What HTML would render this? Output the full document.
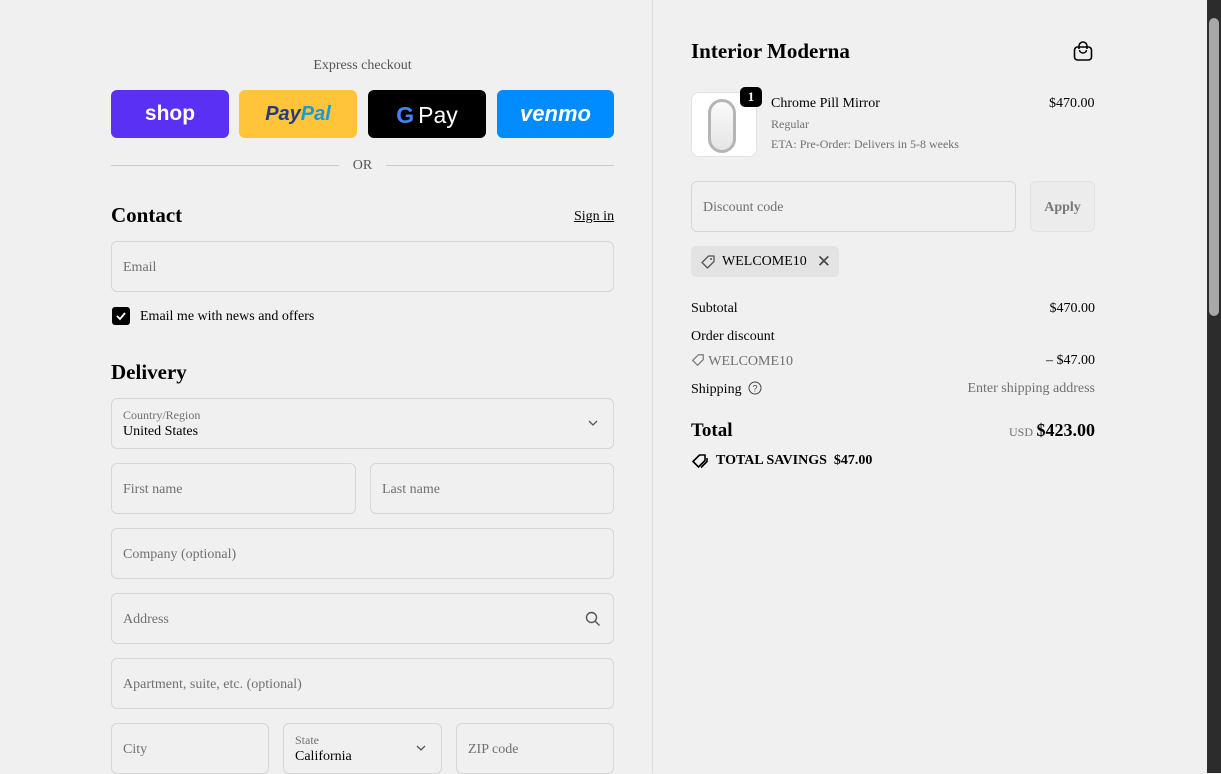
<!DOCTYPE html>
<html><head><meta charset="utf-8"><style>
*{box-sizing:border-box;margin:0;padding:0}
body{width:1221px;height:773px;overflow:hidden;background:#f0f0f0;font-family:"Liberation Serif",serif;color:#000;position:relative}
.abs{position:absolute}
.inp{position:absolute;border:1px solid #d6d6d6;border-radius:6px;background:#f0f0f0;font-size:14px;color:#707070;padding-left:11px;padding-top:2px;display:flex;align-items:center}
.btn{position:absolute;top:90px;height:48px;width:118px;border-radius:6px;display:flex;align-items:center;justify-content:center;font-family:"Liberation Sans",sans-serif;font-weight:bold}
.row{position:absolute;left:691px;width:404px;display:flex;justify-content:space-between;font-size:14px}
</style></head><body>
<div class="abs" style="left:652px;top:0;width:1px;height:773px;background:#dcdcdc"></div>
<div class="abs" style="left:1207px;top:0;width:14px;height:773px;background:#2c2c2c"></div>
<div class="abs" style="left:1209px;top:18px;width:10px;height:298px;background:#a8a8a8;border-radius:5px"></div>

<div class="abs" style="left:111px;width:503px;top:58px;text-align:center;font-size:14px;color:#555">Express checkout</div>
<div class="btn" style="left:111px;background:#5a31f4;color:#fff;font-size:21px">shop</div>
<div class="btn" style="left:239px;background:#ffc439;font-size:20px;font-style:italic"><span style="color:#253b80">Pay</span><span style="color:#179bd7">Pal</span></div>
<div class="btn" style="left:368px;background:#000;color:#fff;font-size:23px;font-weight:normal;padding-top:2px"><span style="font-weight:bold;color:#4285f4;margin-right:4px">G</span>Pay</div>
<div class="btn" style="left:497px;width:117px;background:#008cff;color:#fff;font-size:22px;font-style:italic">venmo</div>
<div class="abs" style="left:111px;top:165px;width:228px;height:1px;background:#ccc"></div>
<div class="abs" style="left:386px;top:165px;width:228px;height:1px;background:#ccc"></div>
<div class="abs" style="left:339px;width:47px;top:158px;text-align:center;font-size:14px;color:#555">OR</div>

<div class="abs" style="left:111px;top:203px;font-size:21px;font-weight:bold">Contact</div>
<div class="abs" style="left:574px;top:209px;font-size:14px;text-decoration:underline">Sign in</div>
<div class="inp" style="left:111px;top:241px;width:503px;height:51px">Email</div>
<div class="abs" style="left:112px;top:307px;width:18px;height:18px;background:#000;border-radius:3px"><svg width="18" height="18" viewBox="0 0 18 18"><path d="M5 9l3 3 5-6" stroke="#fff" stroke-width="1.8" fill="none"/></svg></div>
<div class="abs" style="left:140px;top:309px;font-size:14px">Email me with news and offers</div>

<div class="abs" style="left:111px;top:360px;font-size:21px;font-weight:bold">Delivery</div>
<div class="inp" style="left:111px;top:398px;width:503px;height:51px;display:block;padding-top:9px"><div style="font-size:12px;color:#707070">Country/Region</div><div style="color:#000;font-size:14px;margin-top:1px">United States</div></div>
<svg class="abs" style="left:587px;top:418px" width="12" height="10"><path d="M2 3l4 4 4-4" stroke="#555" stroke-width="1.3" fill="none"/></svg>
<div class="inp" style="left:111px;top:463px;width:245px;height:51px">First name</div>
<div class="inp" style="left:370px;top:463px;width:244px;height:51px">Last name</div>
<div class="inp" style="left:111px;top:528px;width:503px;height:51px">Company (optional)</div>
<div class="inp" style="left:111px;top:593px;width:503px;height:51px">Address</div>
<svg class="abs" style="left:585px;top:611px" width="16" height="16"><circle cx="6.5" cy="6.5" r="5" stroke="#555" stroke-width="1.4" fill="none"/><path d="M10 10l4.5 4.5" stroke="#555" stroke-width="1.4"/></svg>
<div class="inp" style="left:111px;top:658px;width:503px;height:51px">Apartment, suite, etc. (optional)</div>
<div class="inp" style="left:111px;top:723px;width:158px;height:51px">City</div>
<div class="inp" style="left:283px;top:723px;width:159px;height:51px;display:block;padding-top:9px"><div style="font-size:12px">State</div><div style="color:#000;font-size:14px;margin-top:1px">California</div></div>
<svg class="abs" style="left:415px;top:743px" width="12" height="10"><path d="M2 3l4 4 4-4" stroke="#555" stroke-width="1.3" fill="none"/></svg>
<div class="inp" style="left:456px;top:723px;width:158px;height:51px">ZIP code</div>

<div class="abs" style="left:691px;top:39px;font-size:21px;font-weight:bold">Interior Moderna</div>
<svg class="abs" style="left:1072px;top:40px" width="22" height="22" viewBox="0 0 22 22"><rect x="2.5" y="7" width="17" height="13" rx="3" stroke="#000" stroke-width="1.6" fill="none"/><path d="M7 9V6a4 4 0 0 1 8 0v3" stroke="#000" stroke-width="1.6" fill="none"/><path d="M7.5 10a3.5 3 0 0 0 7 0" stroke="#000" stroke-width="1.4" fill="none"/></svg>
<div class="abs" style="left:691px;top:92px;width:66px;height:65px;background:#fff;border-radius:8px;border:1px solid #e2e2e2"></div>
<div class="abs" style="left:708px;top:99px;width:28px;height:54px;border-radius:14px;border:3px solid #b5b5b5;background:linear-gradient(#fafafa,#e5e5e5)"></div>
<div class="abs" style="left:740px;top:87px;width:22px;height:20px;background:#000;border-radius:5px;color:#fff;font-size:13px;font-weight:bold;text-align:center;line-height:20px">1</div>
<div class="abs" style="left:771px;top:96px;font-size:14px">Chrome Pill Mirror</div>
<div class="abs" style="left:771px;top:117px;font-size:12px;color:#707070">Regular</div>
<div class="abs" style="left:771px;top:137px;font-size:12px;color:#707070">ETA: Pre-Order: Delivers in 5-8 weeks</div>
<div class="abs" style="left:1049px;top:96px;font-size:14px">$470.00</div>
<div class="inp" style="left:691px;top:181px;width:325px;height:51px">Discount code</div>
<div class="abs" style="left:1030px;top:181px;width:65px;height:51px;border:1px solid #e2e2e2;border-radius:6px;background:#ececec;color:#777;font-weight:bold;font-size:14px;display:flex;align-items:center;justify-content:center;padding-top:2px">Apply</div>
<div class="abs" style="left:691px;top:246px;width:148px;height:31px;background:#e3e3e3;border-radius:5px;display:flex;align-items:center;padding-left:9px;font-size:14px">
<svg width="16" height="16" viewBox="0 0 16 16"><path d="M2 8.5L8.5 2H14v5.5L7.5 14z" stroke="#555" stroke-width="1.3" fill="none" stroke-linejoin="round"/><circle cx="11" cy="5" r="1" fill="#555"/></svg><span style="margin-left:6px">WELCOME10</span><span style="margin-left:10px;font-size:17px;color:#444;font-family:'DejaVu Sans'">✕</span></div>

<div class="row" style="top:301px"><span>Subtotal</span><span>$470.00</span></div>
<div class="row" style="top:329px"><span>Order discount</span></div>
<div class="row" style="top:353px;color:#707070"><span><svg width="14" height="14" viewBox="0 0 16 16" style="vertical-align:-2px"><path d="M2 8.5L8.5 2H14v5.5L7.5 14z" stroke="#777" stroke-width="1.4" fill="none"/></svg> WELCOME10</span><span style="color:#000">– $47.00</span></div>
<div class="row" style="top:381px"><span>Shipping <svg width="14" height="14" viewBox="0 0 14 14" style="vertical-align:-2px;margin-left:3px"><circle cx="7" cy="7" r="6" stroke="#444" fill="none"/><text x="7" y="10.5" font-size="9" text-anchor="middle" fill="#444" font-family="Liberation Sans">?</text></svg></span><span style="color:#707070">Enter shipping address</span></div>
<div class="row" style="top:420px;align-items:baseline"><span style="font-size:19px;font-weight:bold">Total</span><span><span style="font-size:12px;color:#707070">USD</span> <span style="font-size:18px;font-weight:bold">$423.00</span></span></div>
<div class="abs" style="left:691px;top:452px;font-size:14px;font-weight:bold;display:flex;align-items:center"><svg width="18" height="18" viewBox="0 0 18 18"><path d="M2 9.5L8.5 3H14v5.5L7.5 15z" stroke="#000" stroke-width="1.6" fill="none"/><path d="M16 6v3.5L10 15.5" stroke="#000" stroke-width="1.6" fill="none"/></svg><span style="margin-left:7px">TOTAL SAVINGS&nbsp;&nbsp;$47.00</span></div>
</body></html>
